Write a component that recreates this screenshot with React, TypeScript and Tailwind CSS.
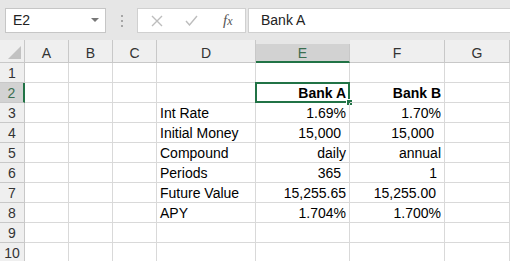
const cols = [
  { key: 'A', w: 44 },
  { key: 'B', w: 44 },
  { key: 'C', w: 44 },
  { key: 'D', w: 99 },
  { key: 'E', w: 94 },
  { key: 'F', w: 95 },
  { key: 'G', w: 65 },
];

type Cell = { text: string; align?: 'left' | 'right'; bold?: boolean; pad?: number };

const data: Record<number, Record<string, Cell>> = {
  2: {
    E: { text: 'Bank A', align: 'right', bold: true },
    F: { text: 'Bank B', align: 'right', bold: true },
  },
  3: {
    D: { text: 'Int Rate' },
    E: { text: '1.69%', align: 'right' },
    F: { text: '1.70%', align: 'right' },
  },
  4: {
    D: { text: 'Initial Money' },
    E: { text: '15,000', align: 'right', pad: 8 },
    F: { text: '15,000', align: 'right', pad: 10 },
  },
  5: {
    D: { text: 'Compound' },
    E: { text: 'daily', align: 'right' },
    F: { text: 'annual', align: 'right' },
  },
  6: {
    D: { text: 'Periods' },
    E: { text: '365', align: 'right', pad: 8 },
    F: { text: '1', align: 'right', pad: 7 },
  },
  7: {
    D: { text: 'Future Value' },
    E: { text: '15,255.65', align: 'right' },
    F: { text: '15,255.00', align: 'right', pad: 8 },
  },
  8: {
    D: { text: 'APY' },
    E: { text: '1.704%', align: 'right' },
    F: { text: '1.700%', align: 'right' },
  },
};

const rows = [1, 2, 3, 4, 5, 6, 7, 8, 9, 10];

function FormulaBar() {
  return (
    <div className="flex h-[40px] items-start bg-[#e6e6e6] pt-[8px]">
      <div className="ml-[5px] flex h-[25px] w-[101px] items-center justify-between border border-[#c6c6c6] bg-white pl-[7px] pr-[6px] text-[14px] text-[#222]">
        <span>E2</span>
        <svg width="8" height="5" viewBox="0 0 8 5">
          <path d="M0 0 L8 0 L4 4 Z" fill="#777" />
        </svg>
      </div>
      <div className="flex w-[31px] flex-col items-center justify-center gap-[3px] self-stretch pb-[7px]">
        <span className="h-[2px] w-[2px] bg-[#a6a6a6]" />
        <span className="h-[2px] w-[2px] bg-[#a6a6a6]" />
        <span className="h-[2px] w-[2px] bg-[#a6a6a6]" />
      </div>
      <div className="flex h-[25px] w-[109px] items-center border border-[#d0d0d0] bg-white">
        <svg className="ml-[13px]" width="12" height="12" viewBox="0 0 12 12">
          <path d="M1 1 L11 11 M11 1 L1 11" stroke="#bdbdbd" strokeWidth="1.4" />
        </svg>
        <svg className="ml-[22px]" width="13" height="11" viewBox="0 0 13 11">
          <path d="M1 6 L4.5 10 L12 1" stroke="#bdbdbd" strokeWidth="1.4" fill="none" />
        </svg>
        <span className="ml-[25px] font-['Liberation_Serif',serif] text-[15px] italic leading-none text-[#555]">
          f<span className="text-[12px]">x</span>
        </span>
      </div>
      <div className="ml-[2px] flex h-[25px] flex-1 items-center border-y border-l border-[#d0d0d0] bg-white pl-[12px] text-[14px] text-[#222]">
        Bank A
      </div>
    </div>
  );
}

function HeaderRow() {
  return (
    <div className="flex h-[23px] bg-[#e6e6e6]">
      <div className="relative w-[25px] border-r border-b border-[#c8c8c8] bg-[#efefef]">
        <svg className="absolute right-[3px] bottom-[3px]" width="13" height="13" viewBox="0 0 13 13">
          <path d="M13 0 L13 13 L0 13 Z" fill="#c2c2c2" />
        </svg>
      </div>
      {cols.map((c) => (
        <div
          key={c.key}
          style={{ width: c.w }}
          className={
            c.key === 'E'
              ? 'mt-[4px] flex items-center justify-center border-r border-b-2 border-r-[#c8c8c8] border-b-[#217346] bg-[#d2d2d2] pt-[2px] text-[14px] text-[#3b6e50]'
              : 'flex items-center justify-center border-r border-b border-[#c8c8c8] bg-[#efefef] pt-[5px] text-[14px] text-[#333]'
          }
        >
          {c.key}
        </div>
      ))}
    </div>
  );
}

function SheetRow({ r }: { r: number }) {
  const active = r === 2;
  return (
    <div className="flex h-[20px]">
      <div
        className={
          active
            ? 'flex w-[25px] items-center justify-center border-r-2 border-b border-r-[#217346] border-b-[#c8c8c8] bg-[#d2d2d2] pt-[2px] text-[14px] text-[#3b6e50]'
            : 'flex w-[25px] items-center justify-center border-r border-b border-[#c8c8c8] bg-[#efefef] pt-[2px] text-[14px] text-[#333]'
        }
      >
        {r}
      </div>
      {cols.map((c) => {
        const cell = data[r]?.[c.key];
        const isActive = active && c.key === 'E';
        return (
          <div
            key={c.key}
            style={{ width: c.w, paddingRight: cell?.pad ?? 3 }}
            className={
              'relative flex items-center whitespace-nowrap border-r border-b border-[#d9d9d9] pl-[3px] pt-[2px] text-[14px] text-black ' +
              (cell?.align === 'right' ? 'justify-end ' : 'justify-start ') +
              (cell?.bold ? 'font-bold' : '')
            }
          >
            {cell?.text}
            {isActive && (
              <>
                <div className="pointer-events-none absolute -top-[1px] -left-[1px] -right-[1px] -bottom-[1px] border-2 border-[#217346]" />
                <div className="absolute -right-[4px] -bottom-[4px] h-[7px] w-[7px] border border-white bg-[#217346]" />
              </>
            )}
          </div>
        );
      })}
    </div>
  );
}

export default function App() {
  return (
    <div className="h-[261px] w-[510px] overflow-hidden bg-white font-['Liberation_Sans',sans-serif]">
      <FormulaBar />
      <HeaderRow />
      {rows.map((r) => (
        <SheetRow key={r} r={r} />
      ))}
    </div>
  );
}
